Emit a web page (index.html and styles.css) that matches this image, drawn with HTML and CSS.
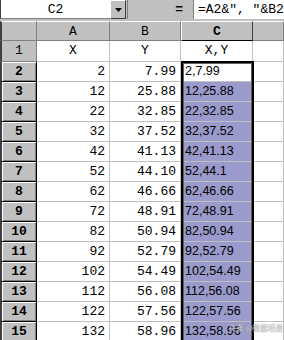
FILE: index.html
```html
<!DOCTYPE html>
<html lang="zh">
<head>
    <meta charset="UTF-8">
    <title>Sheet</title>
    <link rel="stylesheet" href="styles.css">
</head>
<body>
    <div class="sheet">
        <!-- Formula bar -->
        <div class="formula-bar">
            <div class="name-box">C2</div>
            <div class="drop-btn">
                <svg width="7" height="4" viewBox="0 0 7 4"><path d="M0 0h7L3.5 4z" fill="#000"/></svg>
            </div>
            <div class="bar-sep"></div>
            <div class="eq-btn">=</div>
            <div class="formula">=A2&amp;", "&amp;B2</div>
        </div>

        <!-- Grid -->
        <div class="grid">
            <div class="corner"></div>
            <div class="ch">A</div>
            <div class="ch">B</div>
            <div class="ch active">C</div>
            <div class="ch"></div>

            <div class="rh first">1</div>
            <div class="cell center">X</div>
            <div class="cell center">Y</div>
            <div class="cell center">X,Y</div>
            <div class="cell"></div>

            <div class="rh">2</div><div class="cell num">2</div><div class="cell num">7.99</div><div class="cell txt cur">2,7.99</div><div class="cell"></div>
            <div class="rh">3</div><div class="cell num">12</div><div class="cell num">25.88</div><div class="cell txt sel">12,25.88</div><div class="cell"></div>
            <div class="rh">4</div><div class="cell num">22</div><div class="cell num">32.85</div><div class="cell txt sel">22,32.85</div><div class="cell"></div>
            <div class="rh">5</div><div class="cell num">32</div><div class="cell num">37.52</div><div class="cell txt sel">32,37.52</div><div class="cell"></div>
            <div class="rh">6</div><div class="cell num">42</div><div class="cell num">41.13</div><div class="cell txt sel">42,41.13</div><div class="cell"></div>
            <div class="rh">7</div><div class="cell num">52</div><div class="cell num">44.10</div><div class="cell txt sel">52,44.1</div><div class="cell"></div>
            <div class="rh">8</div><div class="cell num">62</div><div class="cell num">46.66</div><div class="cell txt sel">62,46.66</div><div class="cell"></div>
            <div class="rh">9</div><div class="cell num">72</div><div class="cell num">48.91</div><div class="cell txt sel">72,48.91</div><div class="cell"></div>
            <div class="rh">10</div><div class="cell num">82</div><div class="cell num">50.94</div><div class="cell txt sel">82,50.94</div><div class="cell"></div>
            <div class="rh">11</div><div class="cell num">92</div><div class="cell num">52.79</div><div class="cell txt sel">92,52.79</div><div class="cell"></div>
            <div class="rh">12</div><div class="cell num">102</div><div class="cell num">54.49</div><div class="cell txt sel">102,54.49</div><div class="cell"></div>
            <div class="rh">13</div><div class="cell num">112</div><div class="cell num">56.08</div><div class="cell txt sel">112,56.08</div><div class="cell"></div>
            <div class="rh">14</div><div class="cell num">122</div><div class="cell num">57.56</div><div class="cell txt sel">122,57.56</div><div class="cell"></div>
            <div class="rh">15</div><div class="cell num">132</div><div class="cell num">58.96</div><div class="cell txt sel">132,58.96</div><div class="cell"></div>
        </div>

        <!-- selection frame over C2:C15 -->
        <div class="sel-frame"></div>
        <div class="watermark">头条 @数据坦途</div>
    </div>
</body>
</html>
```

FILE: styles.css
```css
body {
    margin: 0;
    background: #fff;
    font-family: "Liberation Mono", monospace;
    font-size: 13px;
    color: #000;
}
.sheet {
    position: relative;
    width: 284px;
    height: 340px;
    overflow: hidden;
    background: #c0c0c0;
}

/* formula bar */
.formula-bar {
    display: flex;
    height: 21px;
    align-items: flex-start;
}
.name-box {
    box-sizing: border-box;
    width: 110px;
    height: 19px;
    background: #fff;
    border-left: 1px solid #404040;
    border-bottom: 1px solid #808080;
    text-align: center;
    line-height: 19px;
}
.drop-btn {
    box-sizing: border-box;
    width: 16px;
    height: 19px;
    display: flex;
    align-items: center;
    justify-content: center;
    background: #c0c0c0;
    border-top: 1px solid #fff;
    border-left: 1px solid #fff;
    border-right: 1px solid #404040;
    border-bottom: 1px solid #404040;
}
.bar-sep {
    width: 1px;
    height: 19px;
    margin-left: 1px;
    background: #808080;
}
.eq-btn {
    width: 65px;
    height: 19px;
    text-align: right;
    padding-right: 10px;
    box-sizing: border-box;
    font-weight: bold;
    line-height: 19px;
}
.formula {
    flex: 1;
    box-sizing: border-box;
    height: 19px;
    background: #fff;
    border-left: 1px solid #808080;
    padding-left: 4px;
    line-height: 19px;
    white-space: nowrap;
}

/* grid */
.grid {
    display: grid;
    grid-template-columns: 37px 73px 71px 72px 31px;
    grid-template-rows: 20px 21px;
    grid-auto-rows: 20px;
    background: #fff;
}
.corner,
.ch,
.rh {
    box-sizing: border-box;
    background: #c0c0c0;
    text-align: center;
}
.corner {
    border-left: 2px solid #404040;
    border-top: 1px solid #fff;
    border-right: 1px solid #808080;
    border-bottom: 1px solid #808080;
}
.ch {
    border-top: 1px solid #fff;
    border-right: 1px solid #808080;
    border-bottom: 1px solid #808080;
    line-height: 19px;
}
.ch.active {
    font-weight: bold;
    border-left: 1px solid #fff;
    border-right: 1px solid #404040;
    border-bottom: 1px solid #000;
}
.rh {
    border-left: 2px solid #404040;
    border-right: 1px solid #000;
    border-bottom: 1px solid #000;
    box-shadow: inset 1px 1px 0 #fff, inset -1px -1px 0 #808080;
    font-weight: bold;
    line-height: 19px;
}
.rh.first {
    font-weight: normal;
    border-right: 1px solid #808080;
    border-bottom: 1px solid #808080;
    box-shadow: none;
    line-height: 20px;
}
.cell {
    box-sizing: border-box;
    border-right: 1px solid #c0c0c0;
    border-bottom: 1px solid #c0c0c0;
    line-height: 19px;
    white-space: nowrap;
    overflow: hidden;
}
.center {
    text-align: center;
}
.num {
    text-align: right;
    padding-right: 4px;
}
.txt {
    font-family: "Liberation Sans", Arial, sans-serif;
    font-size: 12.5px;
    padding-left: 4px;
}
.sel {
    background: #9a9acc;
}

/* thick frame around the selected range */
.sel-frame {
    position: absolute;
    left: 181px;
    top: 61px;
    width: 73px;
    height: 290px;
    box-sizing: border-box;
    border: 2px solid #000;
    box-shadow: inset 0 0 0 1px #606060;
    pointer-events: none;
}
.watermark {
    position: absolute;
    left: 229px;
    top: 322px;
    font-family: "Noto Sans CJK SC", sans-serif;
    font-size: 7.5px;
    color: rgba(255, 255, 255, 0.75);
    text-shadow: 0 0 1px #555;
    white-space: nowrap;
}
```
